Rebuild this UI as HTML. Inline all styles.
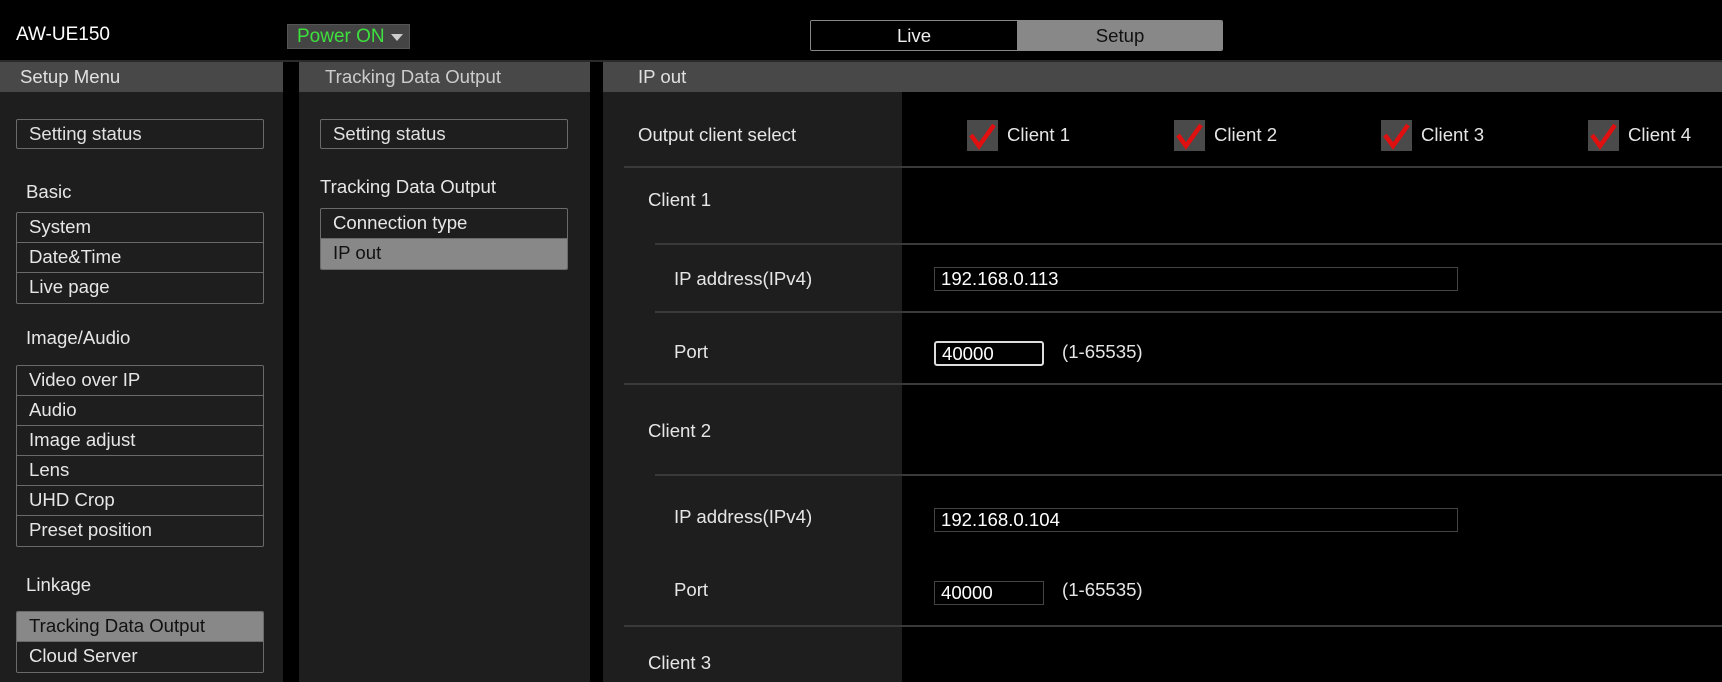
<!DOCTYPE html>
<html><head><meta charset="utf-8"><style>
*{box-sizing:border-box;margin:0;padding:0}
body{width:1722px;height:682px;background:#000;font-family:"Liberation Sans",sans-serif;color:#e6e6e6;font-size:18.6px;position:relative;overflow:hidden}
.a{position:absolute}
.panel{background:#1e1e1f;top:62px;height:620px}
.hdr{background:#484848;height:30px;line-height:30px;color:#e0e0e0}
.box{position:absolute;border:1px solid #6a6a6a;border-radius:2px;padding-left:12px;line-height:28px;color:#e0e0e0}
.grp{position:absolute;border:1px solid #6a6a6a;border-radius:2px}
.grp div{height:30px;line-height:28px;padding-left:12px;border-bottom:1px solid #6a6a6a}
.grp div:last-child{border-bottom:none}
.sel{background:#888;color:#111}
.lab{position:absolute;color:#e6e6e6}
.sep{position:absolute;height:2px;background:#3a3a3a;right:0}
.cb{position:absolute;width:31px;height:31px;background:#4a4a4a}
.inp{position:absolute;border:1px solid #444;background:#000;color:#fff;padding-left:6px;line-height:22px}
</style></head><body>
<div class="a" style="left:16px;top:24px;font-size:19px;color:#fff">AW-UE150</div>
<div class="a" style="left:287px;top:24px;width:123px;height:25px;background:#444;border:1px solid #555;color:#3de03d;font-size:19px;line-height:23px;padding-left:9px">Power ON<span style="position:absolute;right:6px;top:9px;width:0;height:0;border-left:6px solid transparent;border-right:6px solid transparent;border-top:7px solid #ccc"></span></div>
<div class="a" style="left:810px;top:20px;width:413px;height:31px;border:1px solid #888;border-radius:2px;overflow:hidden;display:flex">
<div style="width:207px;background:#000;color:#eee;text-align:center;line-height:29px;border-right:1px solid #888">Live</div>
<div style="flex:1;background:#888;color:#111;text-align:center;line-height:29px">Setup</div></div>
<div class="a" style="left:0;top:60px;width:1722px;height:2px;background:#2a2a2a"></div>

<div class="a panel" style="left:0;width:283px">
<div class="hdr" style="padding-left:20px">Setup Menu</div></div>
<div class="box" style="left:16px;top:119px;width:248px;height:30px">Setting status</div>
<div class="lab" style="left:26px;top:181px">Basic</div>
<div class="grp" style="left:16px;top:212px;width:248px"><div>System</div><div>Date&amp;Time</div><div>Live page</div></div>
<div class="lab" style="left:26px;top:327px">Image/Audio</div>
<div class="grp" style="left:16px;top:365px;width:248px"><div>Video over IP</div><div>Audio</div><div>Image adjust</div><div>Lens</div><div>UHD Crop</div><div>Preset position</div></div>
<div class="lab" style="left:26px;top:574px">Linkage</div>
<div class="grp" style="left:16px;top:611px;width:248px;overflow:hidden"><div class="sel">Tracking Data Output</div><div>Cloud Server</div></div>

<div class="a panel" style="left:299px;width:291px">
<div class="hdr" style="padding-left:26px;color:#ccc">Tracking Data Output</div></div>
<div class="box" style="left:320px;top:119px;width:248px;height:30px">Setting status</div>
<div class="lab" style="left:320px;top:176px">Tracking Data Output</div>
<div class="grp" style="left:320px;top:208px;width:248px;overflow:hidden"><div>Connection type</div><div class="sel">IP out</div></div>

<div class="a" style="left:603px;top:62px;width:1119px;height:30px;background:#484848"></div>
<div class="a" style="left:638px;top:62px;line-height:30px;color:#e0e0e0">IP out</div>
<div class="a" style="left:603px;top:92px;width:299px;height:590px;background:#1e1e1f"></div>

<div class="lab" style="left:638px;top:124px">Output client select</div>
<div class="cb" style="left:967px;top:120px"><svg width="31" height="31"><path d="M4 15 L12 26 L27 5" fill="none" stroke="#e01010" stroke-width="4.5"/></svg></div>
<div class="lab" style="left:1007px;top:124px">Client 1</div>
<div class="cb" style="left:1174px;top:120px"><svg width="31" height="31"><path d="M4 15 L12 26 L27 5" fill="none" stroke="#e01010" stroke-width="4.5"/></svg></div>
<div class="lab" style="left:1214px;top:124px">Client 2</div>
<div class="cb" style="left:1381px;top:120px"><svg width="31" height="31"><path d="M4 15 L12 26 L27 5" fill="none" stroke="#e01010" stroke-width="4.5"/></svg></div>
<div class="lab" style="left:1421px;top:124px">Client 3</div>
<div class="cb" style="left:1588px;top:120px"><svg width="31" height="31"><path d="M4 15 L12 26 L27 5" fill="none" stroke="#e01010" stroke-width="4.5"/></svg></div>
<div class="lab" style="left:1628px;top:124px">Client 4</div>
<div class="sep" style="left:624px;top:166px"></div>

<div class="lab" style="left:648px;top:189px">Client 1</div>
<div class="sep" style="left:655px;top:243px"></div>
<div class="lab" style="left:674px;top:268px">IP address(IPv4)</div>
<div class="inp" style="left:934px;top:267px;width:524px;height:24px">192.168.0.113</div>
<div class="sep" style="left:655px;top:311px"></div>
<div class="lab" style="left:674px;top:341px">Port</div>
<div class="inp" style="left:934px;top:341px;width:110px;height:25px;border:2px solid #ddd;border-radius:3px">40000</div>
<div class="lab" style="left:1062px;top:341px">(1-65535)</div>
<div class="sep" style="left:624px;top:383px"></div>

<div class="lab" style="left:648px;top:420px">Client 2</div>
<div class="sep" style="left:655px;top:474px"></div>
<div class="lab" style="left:674px;top:506px">IP address(IPv4)</div>
<div class="inp" style="left:934px;top:508px;width:524px;height:24px">192.168.0.104</div>
<div class="lab" style="left:674px;top:579px">Port</div>
<div class="inp" style="left:934px;top:581px;width:110px;height:24px">40000</div>
<div class="lab" style="left:1062px;top:579px">(1-65535)</div>
<div class="sep" style="left:624px;top:625px"></div>
<div class="lab" style="left:648px;top:652px">Client 3</div>
</body></html>
